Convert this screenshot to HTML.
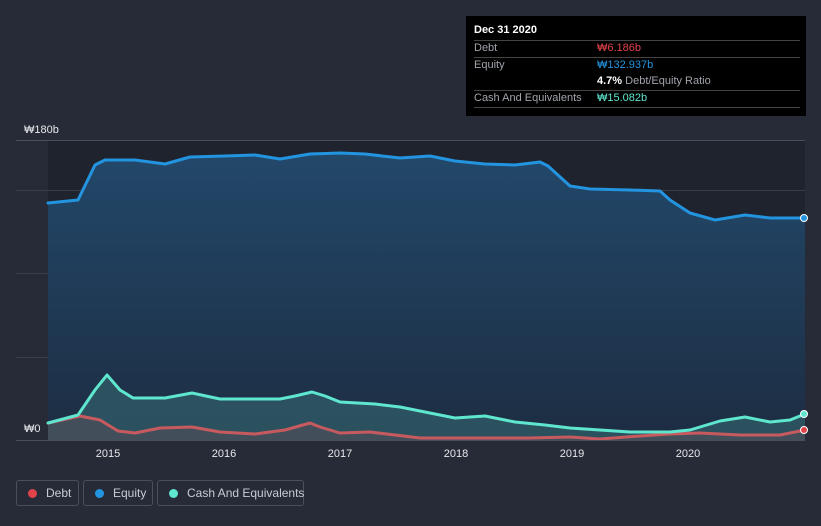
<!DOCTYPE html><html><head><style>
body{margin:0;width:821px;height:526px;background:#262b37;font-family:"Liberation Sans",sans-serif;overflow:hidden;position:relative}
.t{position:absolute;background:#000;left:466px;top:16px;width:340px;height:100px;font-size:11px;color:#a0a4ab}
.r{position:absolute;left:8px;width:326px;border-top:1px solid #444}
.lg{position:absolute;top:480px;height:26px;border:1px solid #4a4f5a;border-radius:3px;color:#c8ccd2;font-size:12px;line-height:24px;box-sizing:border-box;white-space:nowrap}
.lg i{display:inline-block;width:9px;height:9px;border-radius:50%;margin:0 9px 0 11px;vertical-align:-1px}
</style></head><body>
<svg width="821" height="526" style="position:absolute;left:0;top:0">
<defs><linearGradient id="g" x1="0" y1="0" x2="0" y2="1"><stop offset="0" stop-color="#22486a"/><stop offset="1" stop-color="#1d2d42"/></linearGradient></defs>
<rect x="48" y="140" width="757" height="300" fill="#1f232e"/>
<g stroke="#3a3f4a" stroke-width="1"><line x1="16" y1="140.5" x2="805" y2="140.5" stroke="#4a4f5a"/><line x1="16" y1="190.5" x2="805" y2="190.5"/><line x1="16" y1="273.5" x2="805" y2="273.5"/><line x1="16" y1="357.5" x2="805" y2="357.5"/></g>
<polygon fill="url(#g)" points="48,440 48,203 78,200 95,165 105,160 135,160 165,164 190,157 225,156 255,155 280,159 310,154 340,153 365,154 400,158 430,156 455,161 485,164 515,165 540,162 548,166 570,186 590,189 630,190 660,191 670,200 690,213 715,220 745,215 770,218 805,218 805,440"/>
<polygon fill="#2f5a66" opacity="0.8" points="48,440 48,423 78,415 95,390 107,375 120,390 133,398 165,398 192,393 220,399 280,399 295,396 312,392 325,396 340,402 375,404 400,407 430,413 455,418 485,416 515,422 545,425 570,428 600,430 630,432 670,432 690,430 720,421 745,417 770,422 790,420 805,414 805,440"/>
<polygon fill="#4a4d5a" opacity="0.8" points="48,440 48,423 80,416 100,420 118,431 135,433 160,428 192,427 220,432 255,434 285,430 310,423 320,427 340,433 370,432 420,438 530,438 570,437 600,439 640,436 670,434 700,433 740,435 780,435 805,430 805,440"/>
<g fill="none" stroke-width="3" stroke-linejoin="round" stroke-linecap="round">
<polyline stroke="#2394e0" points="48,203 78,200 95,165 105,160 135,160 165,164 190,157 225,156 255,155 280,159 310,154 340,153 365,154 400,158 430,156 455,161 485,164 515,165 540,162 548,166 570,186 590,189 630,190 660,191 670,200 690,213 715,220 745,215 770,218 805,218"/>
<polyline stroke="#c75a5e" points="48,423 80,416 100,420 118,431 135,433 160,428 192,427 220,432 255,434 285,430 310,423 320,427 340,433 370,432 420,438 530,438 570,437 600,439 640,436 670,434 700,433 740,435 780,435 805,430"/>
<polyline stroke="#5ee6cf" points="48,423 78,415 95,390 107,375 120,390 133,398 165,398 192,393 220,399 280,399 295,396 312,392 325,396 340,402 375,404 400,407 430,413 455,418 485,416 515,422 545,425 570,428 600,430 630,432 670,432 690,430 720,421 745,417 770,422 790,420 805,414"/>
</g>
<line x1="16" y1="440.5" x2="805" y2="440.5" stroke="#4a4f5a"/>
<circle cx="804" cy="218" r="3.5" fill="#2394e0" stroke="#fff" stroke-width="1"/>
<circle cx="804" cy="414" r="3.5" fill="#5ee6cf" stroke="#fff" stroke-width="1"/>
<circle cx="804" cy="430" r="3.5" fill="#e0434a" stroke="#fff" stroke-width="1"/>
<g fill="#e6e8eb" font-size="11" font-family="Liberation Sans">
<text x="24" y="133">₩180b</text><text x="24" y="432">₩0</text>
<g text-anchor="middle"><text x="108" y="457">2015</text><text x="224" y="457">2016</text><text x="340" y="457">2017</text><text x="456" y="457">2018</text><text x="572" y="457">2019</text><text x="688" y="457">2020</text></g>
</g>
</svg>
<div class="t">
<div style="position:absolute;left:8px;top:8px;color:#fff;font-weight:bold">Dec 31 2020</div>
<div class="r" style="top:24px"></div>
<div style="position:absolute;left:8px;top:26px">Debt</div><div style="position:absolute;left:131px;top:26px;color:#e0434a">₩6.186b</div>
<div class="r" style="top:41px"></div>
<div style="position:absolute;left:8px;top:43px">Equity</div><div style="position:absolute;left:131px;top:43px;color:#2394e0">₩132.937b</div>
<div style="position:absolute;left:131px;top:59px"><b style="color:#fff">4.7%</b> Debt/Equity Ratio</div>
<div class="r" style="top:74px"></div>
<div style="position:absolute;left:8px;top:76px">Cash And Equivalents</div><div style="position:absolute;left:131px;top:76px;color:#5ee6cf">₩15.082b</div>
<div class="r" style="top:91px"></div>
</div>
<div class="lg" style="left:16px;width:63px"><i style="background:#e0434a"></i>Debt</div>
<div class="lg" style="left:83px;width:70px"><i style="background:#2394e0"></i>Equity</div>
<div class="lg" style="left:157px;width:147px"><i style="background:#5ee6cf"></i>Cash And Equivalents</div>
</body></html>
